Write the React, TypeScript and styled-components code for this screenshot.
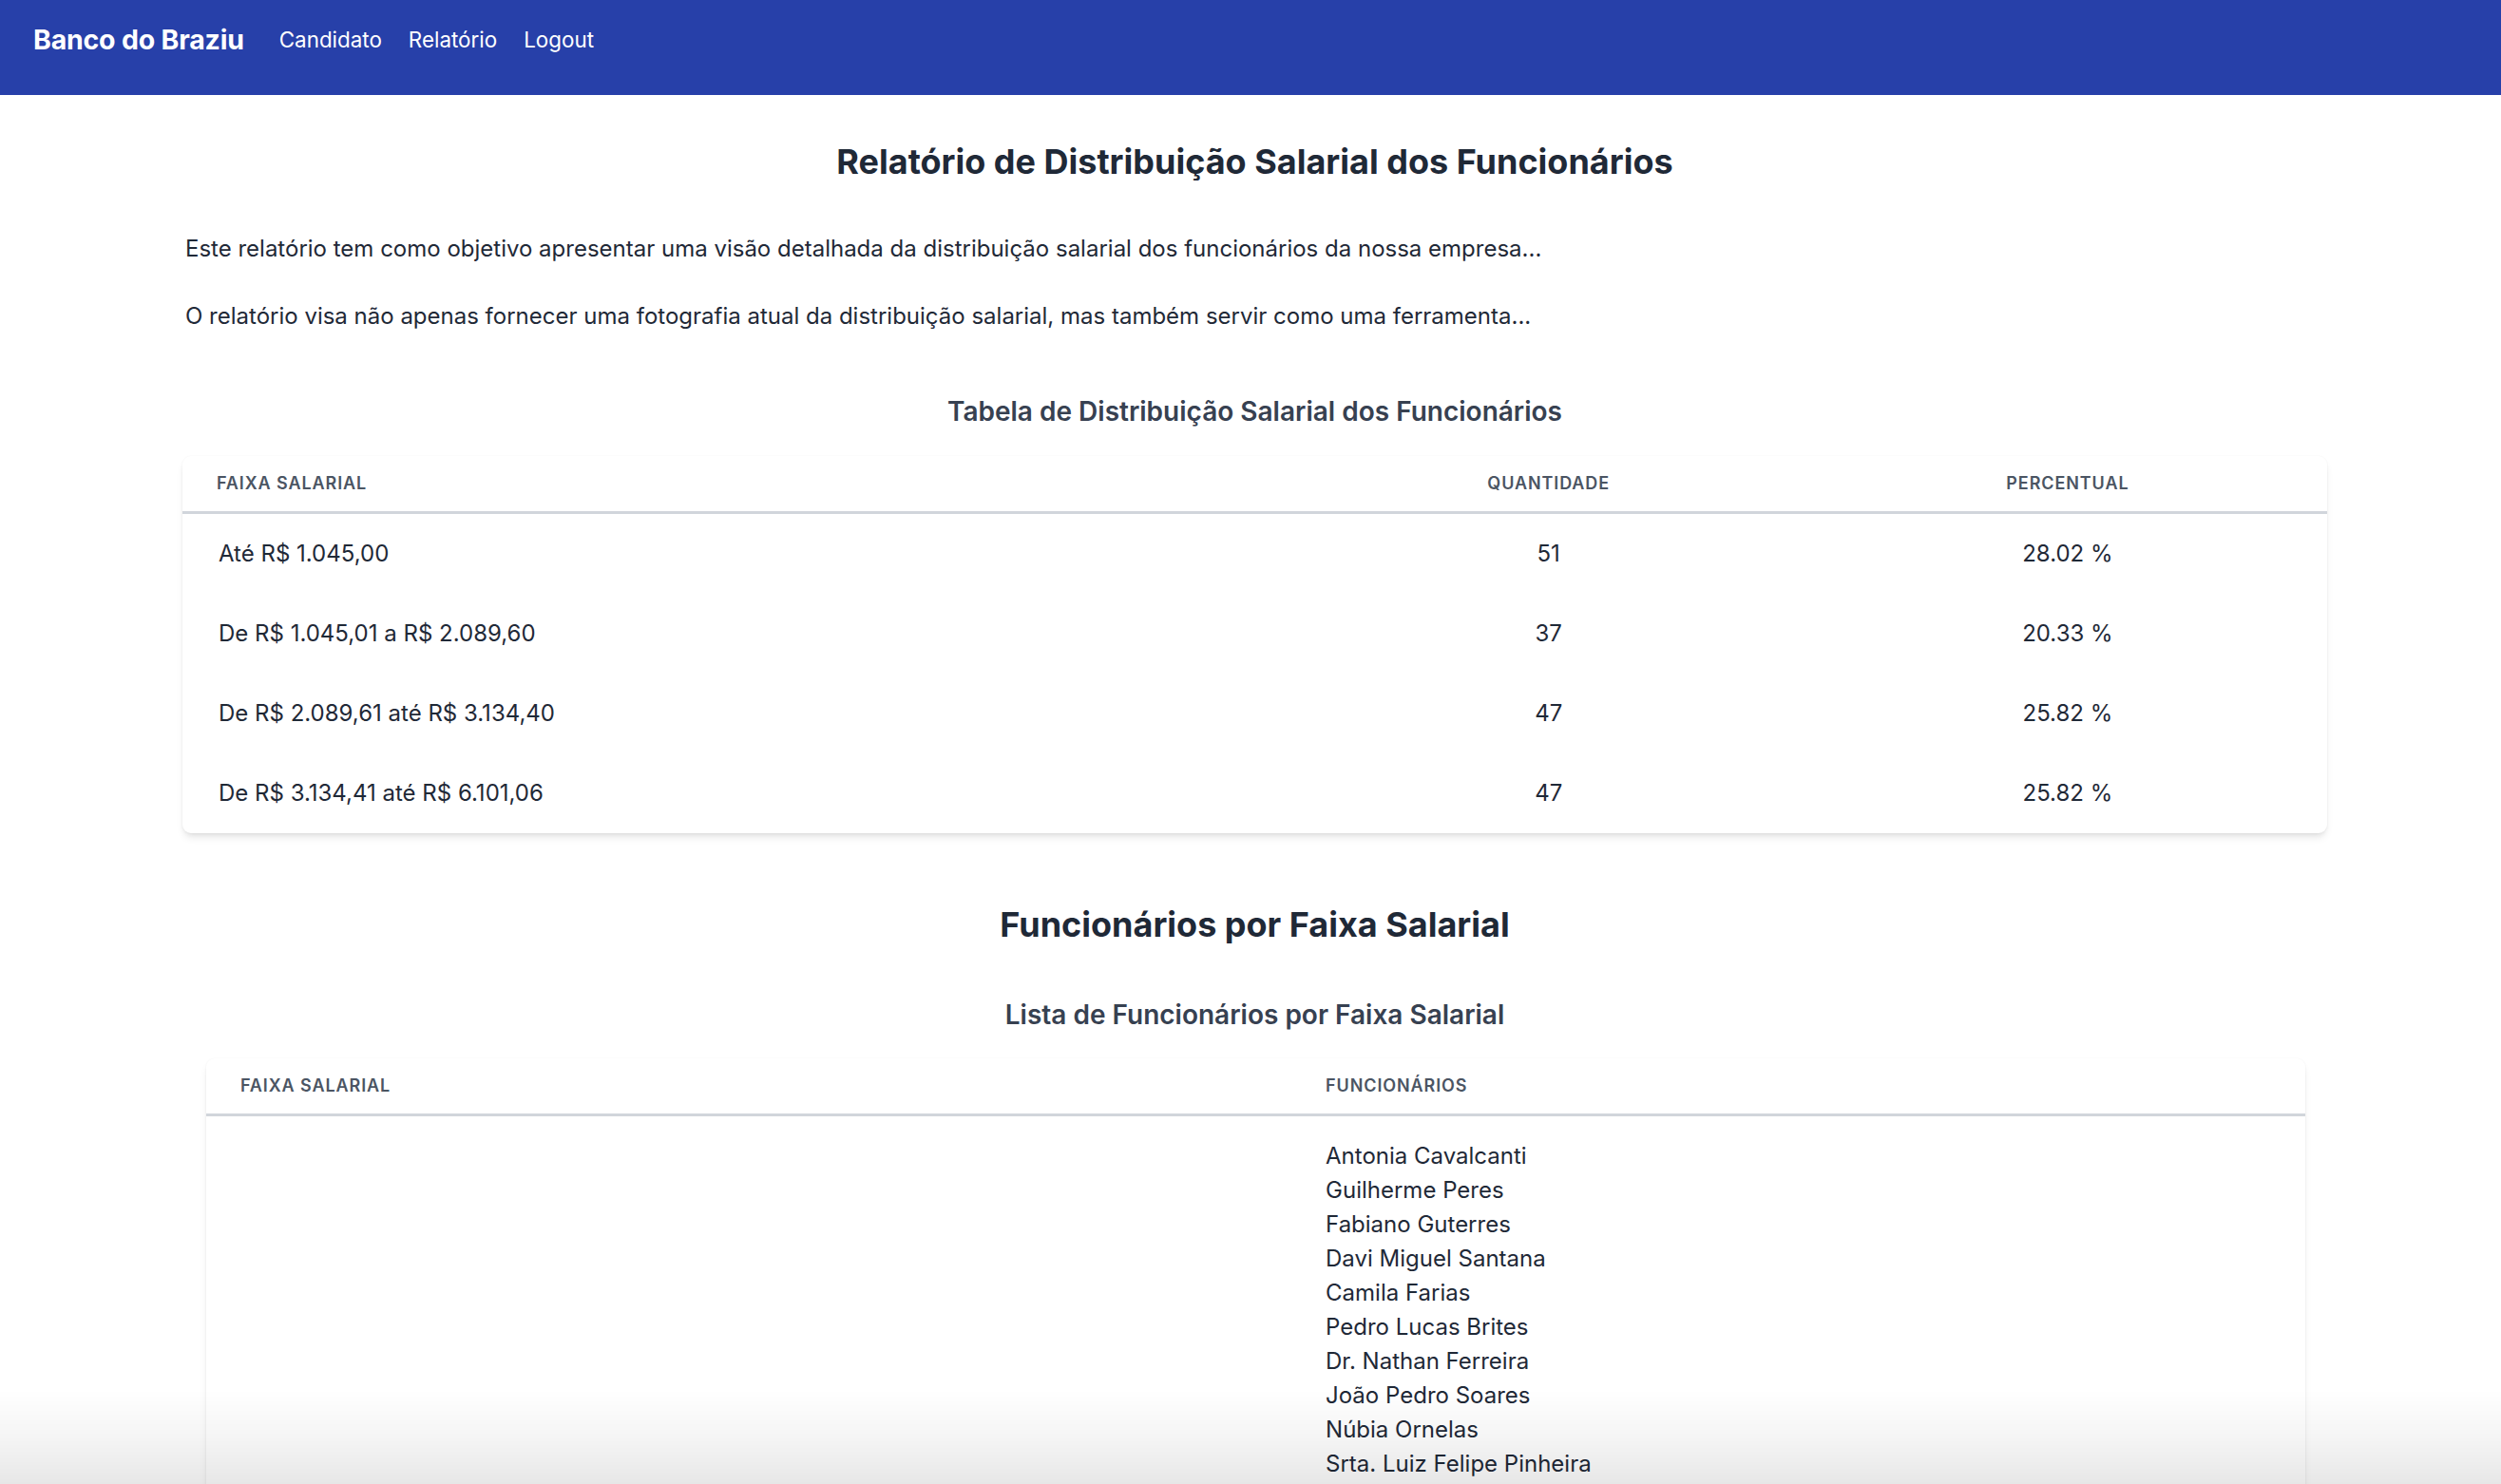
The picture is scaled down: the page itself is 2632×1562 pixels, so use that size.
import React from "react";
import styled, { createGlobalStyle } from "styled-components";

const GlobalStyle = createGlobalStyle`
  * { box-sizing: border-box; }
  html, body { margin: 0; padding: 0; background: #ffffff; }
  body { font-family: Inter, "Noto Sans", "Liberation Sans", sans-serif; color: #1f2937; }
`;

const NavBar = styled.nav`
  height: 100px;
  background: #2740a9;
  display: flex;
  align-items: center;
  padding: 0 36px 16px 35px;
`;

const Brand = styled.a`
  font-size: 28.5px;
  line-height: 36px;
  font-weight: 700;
  color: #ffffff;
  letter-spacing: -0.2px;
  text-decoration: none;
`;

const NavLinks = styled.div`
  display: flex;
  align-items: center;
  gap: 28px;
  margin-left: 37px;
`;

const NavLink = styled.a`
  font-size: 22.4px;
  line-height: 36px;
  font-weight: 400;
  color: #ffffff;
  text-decoration: none;
`;

const Main = styled.main`
  padding: 46px 183px 0 192px;
  display: flex;
  flex-direction: column;
`;

const PageTitle = styled.h1<{ $top?: number }>`
  margin: ${(p) => p.$top ?? 0}px 0 0;
  font-size: 36px;
  line-height: 48px;
  font-weight: 700;
  text-align: center;
  color: #1f2937;
`;

const Paragraph = styled.p<{ $top: number }>`
  margin: ${(p) => p.$top}px 0 0 3px;
  font-size: 24px;
  line-height: 36px;
  color: #1f2937;
`;

const SubTitle = styled.h2<{ $top: number }>`
  margin: ${(p) => p.$top}px 0 0;
  font-size: 28px;
  line-height: 36px;
  font-weight: 600;
  text-align: center;
  color: #374151;
`;

const TableCard = styled.div<{ $inset?: boolean; $top: number }>`
  margin: ${(p) => p.$top}px ${(p) => (p.$inset ? 23 : 0)}px 0 ${(p) => (p.$inset ? 25 : 0)}px;
  background: #ffffff;
  border-radius: 9px;
  overflow: hidden;
  box-shadow: 0 6px 9px -2px rgba(0, 0, 0, 0.1), 0 3px 6px -3px rgba(0, 0, 0, 0.08),
    0 0 2px rgba(0, 0, 0, 0.05);
`;

const Table = styled.table`
  width: 100%;
  border-collapse: collapse;
  table-layout: fixed;
`;

const Th = styled.th<{ $center?: boolean; $w?: string }>`
  width: ${(p) => p.$w ?? "auto"};
  padding: 17px 36px;
  font-size: 18px;
  line-height: 24px;
  font-weight: 600;
  letter-spacing: 0.05em;
  text-transform: uppercase;
  color: #4b5563;
  text-align: ${(p) => (p.$center ? "center" : "left")};
  border-bottom: 3px solid #d1d5db;
`;

const Td = styled.td<{ $center?: boolean }>`
  padding: 24px 38px;
  font-size: 24px;
  line-height: 36px;
  color: #1f2937;
  text-align: ${(p) => (p.$center ? "center" : "left")};
  vertical-align: middle;
`;

const NameCell = styled.td`
  padding: 24px 36px;
  font-size: 24px;
  line-height: 36px;
  color: #1f2937;
  vertical-align: top;
`;

const NameList = styled.ul`
  list-style: none;
  margin: 0;
  padding: 0;
`;

const NameItem = styled.li`
  margin: 0;
`;

const BottomFade = styled.div`
  position: fixed;
  left: 0;
  right: 0;
  bottom: 0;
  height: 100px;
  pointer-events: none;
  background: linear-gradient(to bottom, rgba(0, 0, 0, 0) 0%, rgba(0, 0, 0, 0.04) 50%, rgba(0, 0, 0, 0.095) 100%);
`;

const distribution = [
  { faixa: "Até R$ 1.045,00", qtd: 51, pct: "28.02 %" },
  { faixa: "De R$ 1.045,01 a R$ 2.089,60", qtd: 37, pct: "20.33 %" },
  { faixa: "De R$ 2.089,61 até R$ 3.134,40", qtd: 47, pct: "25.82 %" },
  { faixa: "De R$ 3.134,41 até R$ 6.101,06", qtd: 47, pct: "25.82 %" },
];

const firstGroup = [
  "Antonia Cavalcanti",
  "Guilherme Peres",
  "Fabiano Guterres",
  "Davi Miguel Santana",
  "Camila Farias",
  "Pedro Lucas Brites",
  "Dr. Nathan Ferreira",
  "João Pedro Soares",
  "Núbia Ornelas",
  "Srta. Luiz Felipe Pinheira",
  "Maria Eduarda Rocha",
  "Lorenzo Cardoso",
  "Beatriz Moreira",
  "Sr. Enzo Gabriel Barros",
  "Larissa Nogueira",
  "Thiago Mendes",
  "Isabela Duarte",
  "Vitor Hugo Campos",
  "Sophia Teixeira",
  "Gustavo Ribeiro",
  "Alice Correia",
  "Rafael Lima",
  "Letícia Martins",
  "Bruno Araújo",
];

export default function App() {
  return (
    <>
      <GlobalStyle />
      <NavBar>
        <Brand href="#">Banco do Braziu</Brand>
        <NavLinks>
          <NavLink href="#">Candidato</NavLink>
          <NavLink href="#">Relatório</NavLink>
          <NavLink href="#">Logout</NavLink>
        </NavLinks>
      </NavBar>
      <Main>
        <PageTitle>Relatório de Distribuição Salarial dos Funcionários</PageTitle>
        <Paragraph $top={50}>
          Este relatório tem como objetivo apresentar uma visão detalhada da distribuição salarial dos
          funcionários da nossa empresa...
        </Paragraph>
        <Paragraph $top={35}>
          O relatório visa não apenas fornecer uma fotografia atual da distribuição salarial, mas também
          servir como uma ferramenta...
        </Paragraph>
        <SubTitle $top={64}>Tabela de Distribuição Salarial dos Funcionários</SubTitle>
        <TableCard $top={29}>
          <Table>
            <thead>
              <tr>
                <Th $w="51.6%">Faixa Salarial</Th>
                <Th $center>Quantidade</Th>
                <Th $center>Percentual</Th>
              </tr>
            </thead>
            <tbody>
              {distribution.map((row) => (
                <tr key={row.faixa}>
                  <Td>{row.faixa}</Td>
                  <Td $center>{row.qtd}</Td>
                  <Td $center>{row.pct}</Td>
                </tr>
              ))}
            </tbody>
          </Table>
        </TableCard>
        <PageTitle $top={72}>Funcionários por Faixa Salarial</PageTitle>
        <SubTitle $top={53}>Lista de Funcionários por Faixa Salarial</SubTitle>
        <TableCard $inset $top={28}>
          <Table>
            <thead>
              <tr>
                <Th $w="51.7%">Faixa Salarial</Th>
                <Th>Funcionários</Th>
              </tr>
            </thead>
            <tbody>
              <tr>
                <Td>Até R$ 1.045,00</Td>
                <NameCell>
                  <NameList>
                    {firstGroup.map((n) => (
                      <NameItem key={n}>{n}</NameItem>
                    ))}
                  </NameList>
                </NameCell>
              </tr>
            </tbody>
          </Table>
        </TableCard>
      </Main>
      <BottomFade />
    </>
  );
}
